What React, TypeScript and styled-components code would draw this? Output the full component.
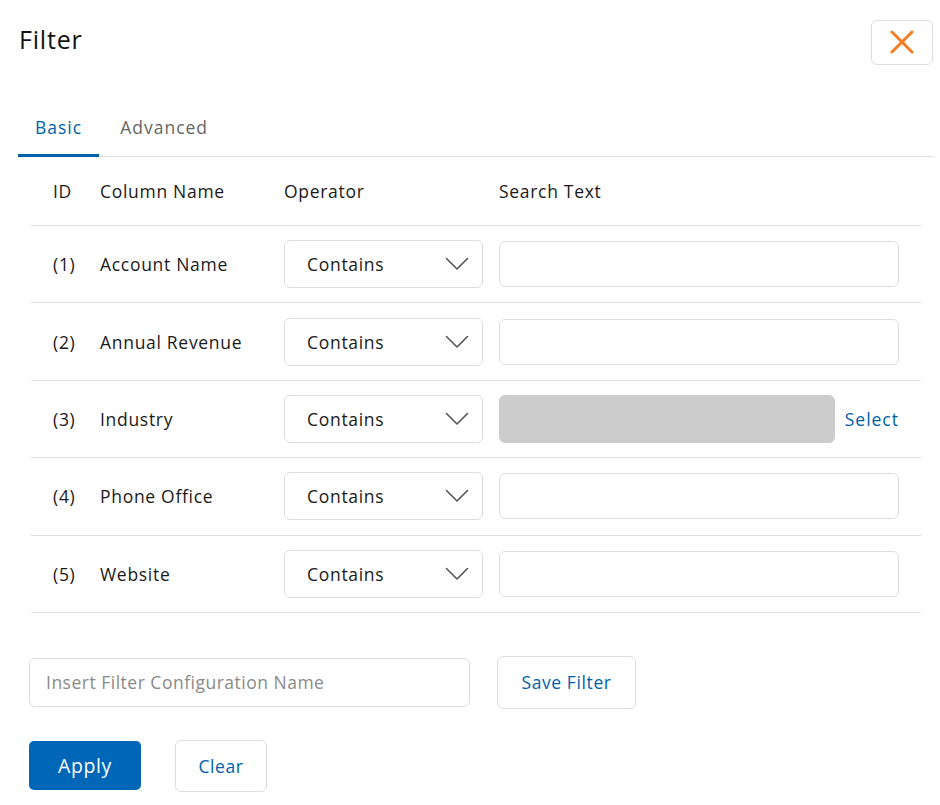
import React from "react";
import styled, { createGlobalStyle } from "styled-components";

const Global = createGlobalStyle`
  html, body { margin: 0; padding: 0; background: #fff; }
  body {
    font-family: "Open Sans", "Noto Sans", sans-serif;
    color: #1a1a1a;
    letter-spacing: 0.7px;
  }
  * { box-sizing: border-box; }
`;

const BLUE = "#0062ad";
const LINE = "#dddddd";
const TEXT_SIZE = "17.5px";

const Panel = styled.div`
  width: 940px;
  padding: 20px 7px 0 18px;
`;

const Header = styled.div`
  display: flex;
  align-items: center;
  justify-content: space-between;
  height: 44px;
`;

const Title = styled.h1`
  margin: 0 0 0 1px;
  font-size: 25px;
  font-weight: 500;
  letter-spacing: 0.8px;
  color: #111;
  line-height: 1;
  position: relative;
  top: -3px;
`;

const CloseButton = styled.button`
  width: 62px;
  height: 45px;
  border: 1px solid ${LINE};
  border-radius: 6px;
  background: #fff;
  display: flex;
  align-items: center;
  justify-content: center;
  padding: 0;
  cursor: pointer;
`;

const TabList = styled.div`
  display: flex;
  margin-top: 36px;
  border-bottom: 1px solid ${LINE};
`;

const Tab = styled.div<{ $active?: boolean }>`
  height: 57px;
  padding: 0 17px;
  display: flex;
  align-items: center;
  font-size: ${TEXT_SIZE};
  letter-spacing: 1px;
  color: ${(p) => (p.$active ? BLUE : "#666")};
  border-bottom: 3px solid ${(p) => (p.$active ? BLUE : "transparent")};
  margin-bottom: -1px;
  margin-right: ${(p) => (p.$active ? "4px" : "0")};
`;

const Table = styled.div`
  margin: 0 12px 0 13px;
`;

const Row = styled.div<{ $head?: boolean }>`
  display: grid;
  grid-template-columns: 69px 184px 215px 1fr;
  align-items: center;
  height: ${(p) => (p.$head ? "69px" : "77.4px")};
  border-bottom: 1px solid ${LINE};
  font-size: ${TEXT_SIZE};
  color: #1a1a1a;
`;

const IdCell = styled.div`
  padding-left: 22px;
`;

const Cell = styled.div``;

const SelectBox = styled.div`
  width: 199px;
  height: 48px;
  border: 1px solid ${LINE};
  border-radius: 6px;
  display: flex;
  align-items: center;
  justify-content: space-between;
  padding: 0 13px 0 22px;
  font-size: ${TEXT_SIZE};
  color: #1a1a1a;
`;

const SearchCell = styled.div`
  display: flex;
  align-items: center;
  gap: 10px;
  width: 400px;
`;

const TextBox = styled.div<{ $disabled?: boolean }>`
  flex: 1;
  height: ${(p) => (p.$disabled ? "48px" : "46px")};
  border: 1px solid ${(p) => (p.$disabled ? "#cccccc" : LINE)};
  background: ${(p) => (p.$disabled ? "#cccccc" : "#fff")};
  border-radius: 6px;
`;

const LinkText = styled.span`
  color: ${BLUE};
  font-size: ${TEXT_SIZE};
  letter-spacing: 1px;
`;

const SaveRow = styled.div`
  display: flex;
  align-items: center;
  gap: 27px;
  margin: 43px 0 0 11px;
`;

const NameInput = styled.input`
  width: 441px;
  height: 49px;
  border: 1px solid ${LINE};
  border-radius: 6px;
  padding: 0 16px;
  font-family: inherit;
  font-size: ${TEXT_SIZE};
  letter-spacing: 0.5px;
  color: #333;
  outline: none;
  &::placeholder { color: #8a8a8a; }
`;

const OutlineButton = styled.button<{ $w: number; $h: number }>`
  width: ${(p) => p.$w}px;
  height: ${(p) => p.$h}px;
  border: 1px solid ${LINE};
  border-radius: 6px;
  background: #fff;
  color: ${BLUE};
  font-family: inherit;
  font-size: ${TEXT_SIZE};
  letter-spacing: 0.6px;
  font-weight: 500;
  cursor: pointer;
`;

const ActionRow = styled.div`
  display: flex;
  align-items: center;
  gap: 34px;
  margin: 31px 0 0 11px;
`;

const PrimaryButton = styled.button`
  width: 112px;
  height: 49px;
  border: none;
  border-radius: 5px;
  background: #0066b8;
  color: #fff;
  font-family: inherit;
  font-size: 19.5px;
  letter-spacing: 0.6px;
  font-weight: 500;
  cursor: pointer;
`;

const Chevron = () => (
  <svg width="24" height="14" viewBox="0 0 24 14" fill="none">
    <path d="M1.5 1.5 L12 12 L22.5 1.5" stroke="#555" strokeWidth="1.6" strokeLinecap="round" strokeLinejoin="round" />
  </svg>
);

const CloseIcon = () => (
  <svg width="24" height="24" viewBox="0 0 24 24" fill="none">
    <path d="M2 2 L22 22 M22 2 L2 22" stroke="#f47c20" strokeWidth="3" strokeLinecap="round" />
  </svg>
);

const rows = [
  { id: 1, name: "Account Name" },
  { id: 2, name: "Annual Revenue" },
  { id: 3, name: "Industry", picker: true },
  { id: 4, name: "Phone Office" },
  { id: 5, name: "Website" },
];

export default function App() {
  return (
    <>
      <Global />
      <Panel>
        <Header>
          <Title>Filter</Title>
          <CloseButton aria-label="Close">
            <CloseIcon />
          </CloseButton>
        </Header>

        <TabList>
          <Tab $active>Basic</Tab>
          <Tab>Advanced</Tab>
        </TabList>

        <Table>
          <Row $head>
            <IdCell>ID</IdCell>
            <Cell>Column Name</Cell>
            <Cell>Operator</Cell>
            <Cell>Search Text</Cell>
          </Row>
          {rows.map((r) => (
            <Row key={r.id}>
              <IdCell>({r.id})</IdCell>
              <Cell>{r.name}</Cell>
              <Cell>
                <SelectBox>
                  Contains
                  <Chevron />
                </SelectBox>
              </Cell>
              <Cell>
                <SearchCell>
                  <TextBox $disabled={r.picker} />
                  {r.picker && <LinkText>Select</LinkText>}
                </SearchCell>
              </Cell>
            </Row>
          ))}
        </Table>

        <SaveRow>
          <NameInput placeholder="Insert Filter Configuration Name" />
          <OutlineButton $w={139} $h={53}>Save Filter</OutlineButton>
        </SaveRow>

        <ActionRow>
          <PrimaryButton>Apply</PrimaryButton>
          <OutlineButton $w={92} $h={52}>Clear</OutlineButton>
        </ActionRow>
      </Panel>
    </>
  );
}
